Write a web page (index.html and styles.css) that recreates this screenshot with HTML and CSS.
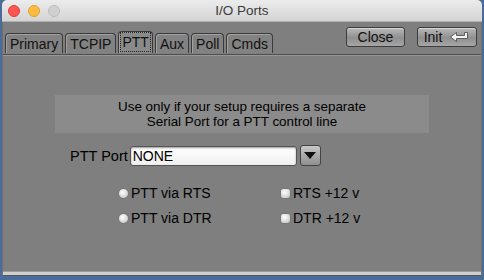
FILE: index.html
```html
<!DOCTYPE html>
<html lang="en">
<head>
    <meta charset="UTF-8">
    <title>I/O Ports</title>
    <link rel="stylesheet" href="styles.css">
</head>
<body>
    <div class="window">
        <div class="titlebar">
            <div class="lights">
                <span class="light red"></span>
                <span class="light yellow"></span>
                <span class="light grey"></span>
            </div>
            <div class="title">I/O Ports</div>
        </div>

        <div class="content">
            <div class="toolbar">
                <div class="tabs">
                    <div class="tab">Primary</div>
                    <div class="tab">TCPIP</div>
                    <div class="tab active"><span class="focus">PTT</span></div>
                    <div class="tab">Aux</div>
                    <div class="tab">Poll</div>
                    <div class="tab">Cmds</div>
                </div>
                <div class="actions">
                    <button class="btn close">Close</button>
                    <button class="btn init">Init
                        <svg width="22" height="12" viewBox="0 0 22 12">
                            <path d="M19.5 1.5 V7.5 H8.5 V10.5 L2.5 6 L8.5 1.5 V4.5 H16.5 V1.5 Z" fill="#f4f4f4" stroke="#444" stroke-width="0.8"/>
                        </svg>
                    </button>
                </div>
            </div>
            <div class="rule"></div>

            <div class="panel">
                <div class="note">
                    Use only if your setup requires a separate<br>
                    Serial Port for a PTT control line
                </div>

                <div class="port-row">
                    <label>PTT Port</label>
                    <div class="combo">NONE</div>
                    <div class="drop"><span class="arrow"></span></div>
                </div>

                <div class="options">
                    <div class="opt"><span class="radio"></span>PTT via RTS</div>
                    <div class="opt"><span class="check"></span>RTS +12 v</div>
                    <div class="opt"><span class="radio"></span>PTT via DTR</div>
                    <div class="opt"><span class="check"></span>DTR +12 v</div>
                </div>
            </div>
            <div class="footer"></div>
        </div>
    </div>
</body>
</html>
```

FILE: styles.css
```css
body {
    margin: 0;
    background: #4a6c9b;
    font-family: 'Liberation Sans', Arial, sans-serif;
    font-size: 14px;
    color: #000;
}
.window {
    margin: 0 2px;
    height: 276px;
    display: flex;
    flex-direction: column;
    border-radius: 5px 5px 0 0;
    overflow: hidden;
}
.titlebar {
    height: 22px;
    flex: none;
    background: linear-gradient(#ececec, #d4d4d4);
    border-bottom: 1px solid #b0b0b0;
    box-sizing: border-box;
    position: relative;
    display: flex;
    align-items: center;
    justify-content: center;
}
.lights {
    position: absolute;
    left: 6px;
    top: 5px;
    display: flex;
    gap: 8px;
}
.light {
    width: 12px;
    height: 12px;
    border-radius: 50%;
    box-sizing: border-box;
}
.red {background: #fc5753; border: 1px solid #df3d39;}
.yellow {background: #fdbc40; border: 1px solid #de9f34;}
.grey {background: #d0d0d0; border: 1px solid #bcbcbc;}
.title {
    font-size: 13.5px;
    color: #3a3a3a;
}
.content {
    flex: 1;
    background: #7f7f7f;
    display: flex;
    flex-direction: column;
    border-left: 1px solid #6f6f6f;
    border-right: 1px solid #6f6f6f;
}
.toolbar {
    display: flex;
    justify-content: space-between;
    align-items: flex-end;
    height: 31px;
    padding: 0 4px 0 2px;
}
.tabs {
    display: flex;
    gap: 2px;
    align-items: flex-end;
}
.tab {
    height: 19px;
    padding: 0 4px;
    border: 1px solid #3a3a3a;
    border-bottom: none;
    border-radius: 4px 4px 0 0;
    background: #828282;
    box-shadow: inset 1px 1px 0 #a2a2a2;
    font-size: 14px;
    line-height: 20px;
    color: #111;
}
.tab.active {
    height: 21px;
    padding: 0 2px;
    background: #8a8a8a;
}
.focus {
    display: inline-block;
    line-height: 18px;
    padding: 0 1px;
    margin-top: 1px;
    outline: 1px dotted #222;
}
.actions {
    display: flex;
    gap: 12px;
    align-self: flex-start;
    margin-top: 5px;
}
.btn {
    height: 20px;
    border: 1px solid #3c3c3c;
    border-radius: 3px;
    background: linear-gradient(#b9b9b9, #8f8f8f 55%, #a6a6a6);
    box-shadow: inset 0 1px 0 #d6d6d6;
    font-family: inherit;
    font-size: 14px;
    color: #111;
    padding: 0;
    display: flex;
    align-items: center;
    justify-content: center;
}
.close {width: 59px;}
.init {width: 60px; gap: 6px;}
.rule {
    height: 1px;
    margin-top: 1px;
    background: #4f4f4f;
    border-bottom: 1px solid #979797;
}
.panel {
    flex: 1;
    padding: 39px 0 0 0;
}
.note {
    margin: 0 52px;
    background: #8b8b8b;
    text-align: center;
    font-size: 13.4px;
    line-height: 15px;
    padding: 4px 0;
}
.port-row {
    display: flex;
    align-items: center;
    margin: 12px 0 0 67px;
    gap: 2px;
}
.port-row label {
    font-size: 14.5px;
}
.combo {
    width: 163px;
    height: 18px;
    border: 1px solid #555;
    border-radius: 3px;
    background: linear-gradient(#ffffff, #f0f0f0);
    box-shadow: inset 0 1px 2px #999;
    font-size: 14px;
    line-height: 19px;
    padding-left: 2px;
}
.drop {
    width: 19px;
    height: 19px;
    margin-left: 1px;
    border: 1px solid #444;
    border-radius: 3px;
    background: linear-gradient(#c8c8c8, #8e8e8e);
    display: flex;
    align-items: center;
    justify-content: center;
}
.arrow {
    width: 0;
    height: 0;
    border-left: 6px solid transparent;
    border-right: 6px solid transparent;
    border-top: 7px solid #111;
}
.options {
    display: grid;
    grid-template-columns: 162px auto;
    row-gap: 11px;
    margin: 20px 0 0 115px;
}
.opt {
    display: flex;
    align-items: center;
    gap: 2px;
    font-size: 14px;
    height: 14px;
}
.radio, .check {
    width: 11px;
    height: 11px;
    box-sizing: border-box;
    border: 1px solid #777;
    background: radial-gradient(circle at 40% 35%, #ffffff, #d0d0d0 70%, #a8a8a8);
}
.radio {border-radius: 50%;}
.check {border-radius: 3px;}
.footer {
    height: 3px;
    background: #cfcfcf;
    border-top: 1px solid #9a9a9a;
    border-bottom: 1px solid #555;
}
```
